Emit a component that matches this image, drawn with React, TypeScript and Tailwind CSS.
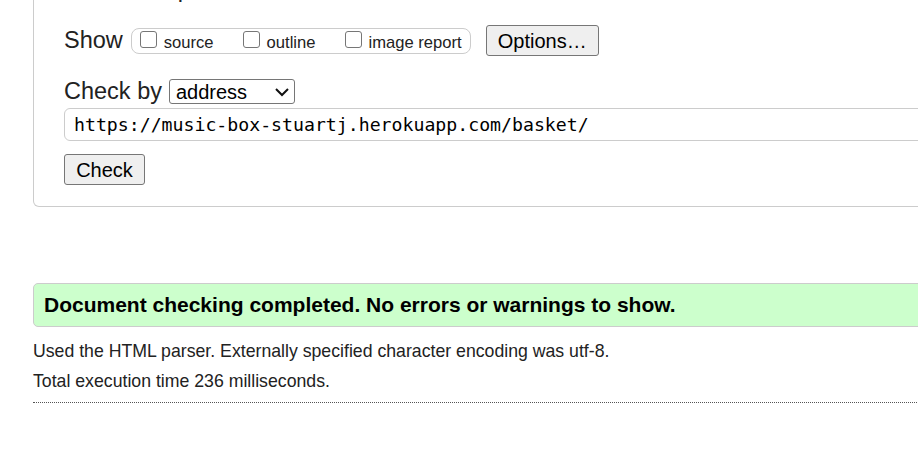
const sans = { fontFamily: '"Liberation Sans", Arial, sans-serif' };

const Checkbox = ({ label }: { label: string }) => (
  <label className="flex items-baseline gap-[7px]">
    <span className="mb-[1px] inline-block h-[17px] w-[17px] rounded-[3px] border border-[#767676] bg-white" />
    <span className="text-[16.6px] leading-none text-[#222]">{label}</span>
  </label>
);

const App = () => {
  return (
    <main
      className="h-[468px] w-[918px] overflow-hidden bg-white pl-[33px]"
      style={sans}
    >
      <div className="-mt-[24px] w-[920px] rounded-b-md border-x border-b border-[#cccccc] pb-[21px] pl-[30px]">
        <div className="h-[27px] text-[23.5px] leading-[27px] text-[#222]">
          Checker Input
        </div>

        <div className="mt-[22px] flex h-[31px] items-center">
          <span className="text-[23.5px] leading-none text-[#222]">Show</span>
          <div className="ml-[8px] flex h-[26px] items-center gap-[29px] rounded-lg border border-[#cccccc] pl-[8px] pr-[8px] pt-[1px]">
            <Checkbox label="source" />
            <Checkbox label="outline" />
            <Checkbox label="image report" />
          </div>
          <button className="ml-[15px] h-[31px] w-[113px] rounded-[3px] border border-[#767676] bg-[#efefef] text-[20px] leading-none text-black">
            Options…
          </button>
        </div>

        <div className="mt-[23px] flex h-[25px] items-center">
          <span className="text-[23.5px] leading-none text-[#222]">
            Check by
          </span>
          <div className="ml-[7px] flex h-[25px] w-[126px] items-center justify-between rounded-[3px] border border-[#767676] bg-white pl-[6px] pr-[4px]">
            <span className="text-[20px] leading-none text-black">address</span>
            <svg width="16" height="10" viewBox="0 0 16 10">
              <polyline
                points="2,2 8,8 14,2"
                fill="none"
                stroke="#111"
                strokeWidth="2"
              />
            </svg>
          </div>
        </div>

        <div
          className="mt-[4px] flex h-[33px] items-center rounded-md border border-[#cccccc] pl-[9px] text-[18.2px] text-black"
          style={{ fontFamily: '"DejaVu Sans Mono", "Liberation Mono", monospace' }}
        >
          https://music-box-stuartj.herokuapp.com/basket/
        </div>

        <button className="mt-[13px] h-[31px] w-[81px] rounded-[3px] border border-[#767676] bg-[#efefef] text-[20px] leading-none text-black">
          Check
        </button>
      </div>

      <div className="mt-[76px] flex h-[44px] w-[900px] items-center rounded-[5px] border border-[#cccccc] bg-[#ccffcc] pl-[10px]">
        <p className="text-[21px] font-bold text-black">
          Document checking completed. No errors or warnings to show.
        </p>
      </div>

      <p className="mt-[9px] text-[17.7px] leading-[30px] text-[#222]">
        Used the HTML parser. Externally specified character encoding was utf-8.
      </p>
      <p className="text-[17.7px] leading-[30px] text-[#222]">
        Total execution time 236 milliseconds.
      </p>
      <div className="mt-[6px] w-[900px] border-t border-dotted border-[#555]" />
    </main>
  );
};

export default App;
